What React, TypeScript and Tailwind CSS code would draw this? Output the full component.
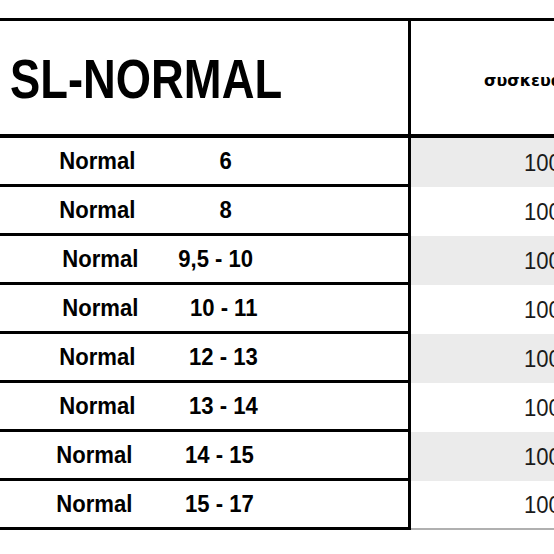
import React from "react";

const rows = [
  { size: "6", nCls: "", sCls: "translate-x-[3px]", gray: true },
  { size: "8", nCls: "", sCls: "translate-x-[3px]", gray: false },
  { size: "9,5 - 10", nCls: "translate-x-[3px]", sCls: "-translate-x-[7px]", gray: true },
  { size: "10 - 11", nCls: "translate-x-[3px]", sCls: "translate-x-[1px]", gray: false },
  { size: "12 - 13", nCls: "", sCls: "", gray: true },
  { size: "13 - 14", nCls: "", sCls: "", gray: false },
  { size: "14 - 15", nCls: "-translate-x-[3px]", sCls: "-translate-x-[4px]", gray: true },
  { size: "15 - 17", nCls: "-translate-x-[3px]", sCls: "-translate-x-[4px]", gray: false },
];

export default function App() {
  return (
    <div className="w-[554px] h-[554px] overflow-hidden bg-white" style={{ fontFamily: '"Liberation Sans", Arial, sans-serif' }}>
      <div className="mt-[18px] w-[760px]">
        {/* Header */}
        <div className="flex border-t-[3px] border-black border-b-[4px] h-[120px]">
          <div className="w-[411px] shrink-0 border-r-[3px] border-black flex items-center pl-[10px] pt-[2px]">
            <span className="inline-block origin-left scale-x-[0.81] text-[56px] font-bold text-black leading-none whitespace-nowrap">SL-NORMAL</span>
          </div>
          <div className="flex-1 flex items-center pl-[73px] pt-[6px]">
            <span className="text-[16px] font-bold text-black whitespace-nowrap" style={{ fontFamily: '"DejaVu Sans", sans-serif' }}>συσκευασία</span>
          </div>
        </div>
        {/* Rows */}
        {rows.map((r, i) => (
          <div key={i} className="flex h-[49px]">
            <div className="w-[411px] shrink-0 border-r-[3px] border-black border-b-[3px] flex items-center">
              <div className={"w-[194px] flex justify-center " + r.nCls}>
                <span className="inline-block scale-x-[0.92] text-[24px] font-bold text-black whitespace-nowrap">Normal</span>
              </div>
              <div className={"w-[58px] flex justify-center " + r.sCls}>
                <span className="inline-block scale-x-[0.92] text-[24px] font-bold text-black whitespace-nowrap">{r.size}</span>
              </div>
            </div>
            <div className={"flex-1 flex items-center pl-[113px] " + (r.gray ? "bg-[#ebebeb]" : "bg-white") + (i === rows.length - 1 ? " border-b-[2px] border-[#b0b0b0]" : "")}>
              <span className="inline-block origin-left scale-x-[0.92] text-[24px] text-[#1a1a1a] whitespace-nowrap">1000</span>
            </div>
          </div>
        ))}
      </div>
    </div>
  );
}
